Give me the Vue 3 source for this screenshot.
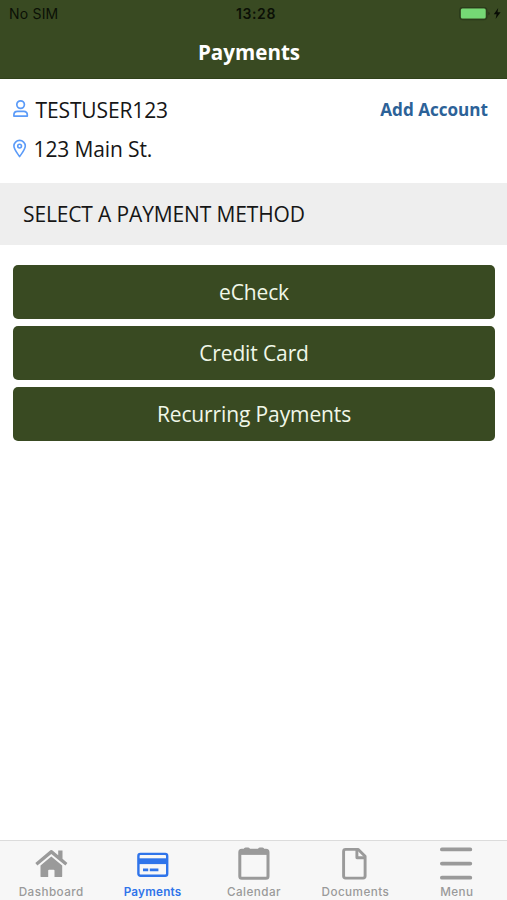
<script setup>
const methods = ['eCheck', 'Credit Card', 'Recurring Payments']
const tabs = [
  { id: 'dashboard', label: 'Dashboard' },
  { id: 'payments', label: 'Payments', active: true },
  { id: 'calendar', label: 'Calendar' },
  { id: 'documents', label: 'Documents' },
  { id: 'menu', label: 'Menu' },
]
</script>

<template>
  <div class="screen">
    <header class="header">
      <div class="status">
        <span class="carrier">No SIM</span>
        <span class="time">13:28</span>
        <svg class="battery" width="44" height="14" viewBox="0 0 44 14">
          <rect x="0.7" y="0.4" width="27.2" height="12.2" rx="3" fill="none" stroke="#2b3b1b" stroke-width="1.2" />
          <rect x="1.9" y="1.6" width="24.8" height="9.8" rx="1.5" fill="#75d875" />
          <path d="M29.4 4.7v3.6q1.3-.5 1.3-1.8t-1.3-1.8z" fill="#24341a" />
          <path d="M39.2 .9l-4.4 6.3h2.8l-1 4.9 5-6.8h-3.1z" fill="#080c05" />
        </svg>
      </div>
      <h1 class="title">Payments</h1>
    </header>

    <section class="account">
      <div class="row">
        <svg class="icon" width="16" height="20" viewBox="0 0 16 20" fill="none" stroke="#5b9bf8" stroke-width="1.7">
          <circle cx="7.6" cy="6.6" r="3.8" />
          <path d="M.9 18.1v-1.2q0-3.5 3.5-3.5h6.4q3.5 0 3.5 3.5v1.2z" stroke-linejoin="round" />
        </svg>
        <span class="user">TESTUSER123</span>
        <a class="add">Add Account</a>
      </div>
      <div class="row">
        <svg class="icon" width="16" height="20" viewBox="0 0 16 20" fill="none" stroke="#5b9bf8" stroke-width="1.6">
          <path d="M6.6 18.6C4.8 15.7.9 11.7.9 8.1a5.7 5.7 0 0 1 11.4 0c0 3.6-3.9 7.6-5.7 10.5z" stroke-linejoin="round" />
          <circle cx="6.6" cy="8.1" r="1.9" />
        </svg>
        <span class="address">123 Main St.</span>
      </div>
    </section>

    <h2 class="section"><span>SELECT A PAYMENT METHOD</span></h2>

    <main class="methods">
      <button v-for="m in methods" :key="m" class="method">{{ m }}</button>
    </main>

    <nav class="tabs">
      <a v-for="t in tabs" :key="t.id" class="tab" :class="{ active: t.active }">
        <svg width="36" height="36" viewBox="0 0 36 36" fill="none" stroke="currentColor">
          <g v-if="t.id === 'dashboard'" fill="currentColor" stroke="none">
            <path d="M17.4 5.3q.9-.7 1.8 0l6 5V5.5h4.3v8.3l4.9 4.1-2 2.7L18.3 9.1 4.4 20.6l-2.1-2.7z" />
            <path d="M18.3 11.4 29.2 20.4v10.8q0 .9-.9.9h-6.8v-6.5q0-.9-.9-.9h-4.5q-.9 0-.9.9v6.5H8.4q-.9 0-.9-.9V20.4z" />
          </g>
          <g v-else-if="t.id === 'payments'">
            <rect x="4.4" y="8.9" width="28.8" height="21.8" rx="2" stroke-width="2.4" />
            <path d="M4 16.2h29.6" stroke-width="5.8" />
            <path d="M9 24.8h5.2M15.8 24.8h8.6" stroke-width="2.8" />
          </g>
          <g v-else-if="t.id === 'calendar'">
            <rect x="3.8" y="5.2" width="28.2" height="28" rx="2" stroke-width="3" />
            <path d="M3.4 7.4h29" stroke-width="5" />
            <path d="M9.5 4h2.8M23.7 4h2.8" stroke-width="3.2" stroke-linecap="round" />
          </g>
          <g v-else-if="t.id === 'documents'" stroke-width="2.9" stroke-linejoin="round">
            <path d="M8.6 4.4h12.7l6.8 6.9v19.8q0 2-2 2H8.6q-2 0-2-2v-24.7q0-2 2-2z" />
            <path d="M19.9 5v7.8h7.6" />
          </g>
          <path v-else d="M3.9 4.4h28.4M3.9 18.6h28.4M3.9 32.7h28.4" stroke-width="3.8" stroke-linecap="round" />
        </svg>
        <span class="label">{{ t.label }}</span>
      </a>
    </nav>
  </div>
</template>

<style>
body { margin: 0; background: #fff; }
</style>

<style scoped>
.screen {
  display: flex;
  flex-direction: column;
  width: 507px;
  height: 900px;
  overflow: hidden;
  font-family: "Open Sans", sans-serif;
  color: #161616;
  background: #fff;
}
.header { height: 79px; box-sizing: border-box; background: #394a22; border-bottom: 1px solid #30411a; }
.status {
  display: grid;
  grid-template-columns: 1fr auto 1fr;
  align-items: center;
  height: 27px;
  padding: 0 4px 0 9px;
  font-family: Inter, sans-serif;
  font-size: 14px;
  color: #0b1006;
}
.carrier { letter-spacing: 0.2px; }
.time { font-weight: 600; letter-spacing: 0.6px; }
.battery { justify-self: end; }
.title { margin: 0; font-size: 20.6px; line-height: 51px; font-weight: 700; color: #fff; text-align: center; padding-right: 9px; }
.account { height: 104px; box-sizing: border-box; padding: 11px 19px 0 13px; }
.row { display: flex; align-items: center; height: 39.5px; font-size: 21px; letter-spacing: -0.12px; }
.icon { flex: none; margin-top: -3px; }
.user { margin-left: 6.5px; }
.address { margin-left: 4.5px; }
.add { margin-left: auto; margin-top: -1px; font-size: 17.1px; font-weight: 700; letter-spacing: 0; color: #2c6298; }
.section { display: flex; align-items: center; height: 62px; margin: 0; padding-left: 23px; font-size: 21px; letter-spacing: -0.14px; font-weight: 400; background: #eee; }
.methods { display: flex; flex-direction: column; gap: 7.5px; flex: 1; padding: 20px 12px 0 13px; }
.method { height: 53.5px; padding: 0; border: 0; border-radius: 5px; background: #394a22; color: #f0f7e8; font: 21px "Open Sans", sans-serif; letter-spacing: -0.12px; }
.tabs { display: flex; height: 60px; box-sizing: border-box; border-top: 1px solid #dcdcdc; background: #f7f7f7; }
.tab { display: flex; flex-direction: column; align-items: center; flex: 1; padding-top: 4px; color: #9a9a9a; }
.tab.active { color: #2f74ea; }
.label { font: 500 11.7px/16px Inter, sans-serif; letter-spacing: 0.45px; margin-top: 3px; padding-left: 1px; }
.active .label { font-weight: 600; letter-spacing: 0.25px; }
</style>
